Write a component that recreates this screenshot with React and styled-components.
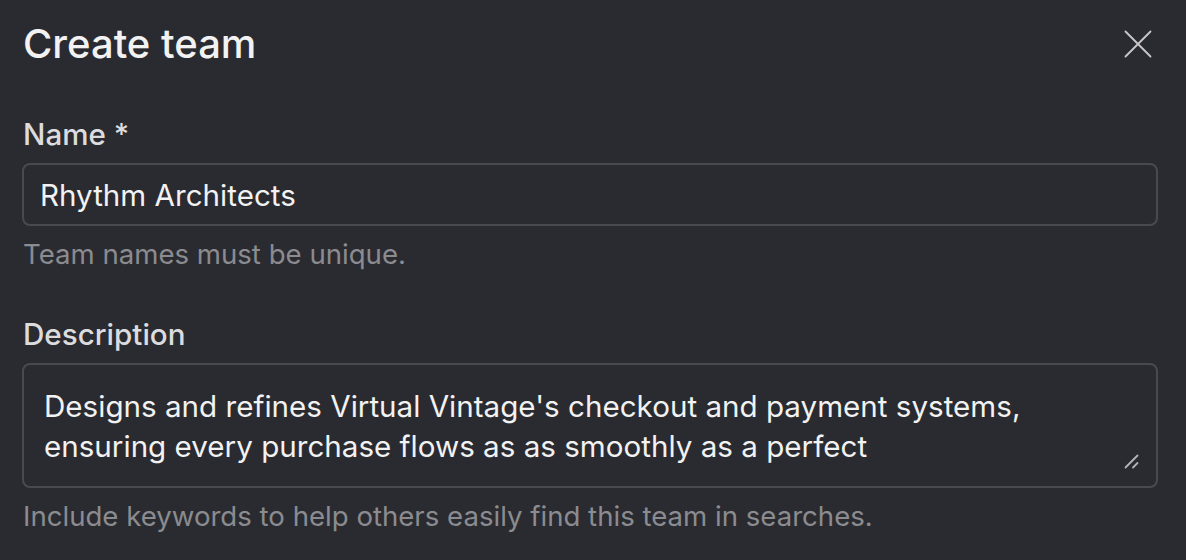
import React from 'react';
import styled, { createGlobalStyle } from 'styled-components';

const Global = createGlobalStyle`
  html, body {
    margin: 0;
    padding: 0;
    background: #2a2b30;
    color-scheme: dark;
  }
  body {
    font-family: Inter, "Noto Sans", sans-serif;
  }
`;

const Dialog = styled.div`
  display: flex;
  flex-direction: column;
  padding: 19px 28px 0 22px;
  background: #2a2b30;
  min-height: 560px;
  box-sizing: border-box;
`;

const Header = styled.div`
  display: flex;
  align-items: center;
  justify-content: space-between;
  height: 50px;
  margin-bottom: 45px;
`;

const Title = styled.h1`
  margin: 0;
  padding-left: 1px;
  font-size: 40px;
  line-height: 50px;
  font-weight: 500;
  color: #f2f2f3;
`;

const CloseButton = styled.button`
  display: flex;
  align-items: center;
  justify-content: center;
  width: 36px;
  height: 36px;
  padding: 0;
  margin-right: 2px;
  border: none;
  background: transparent;
  color: #c9c9cc;
  cursor: pointer;
`;

const Field = styled.div`
  display: flex;
  flex-direction: column;
  margin-bottom: ${p => p.$gap || 0}px;
`;

const Label = styled.label`
  font-size: 29.6px;
  line-height: 40px;
  font-weight: 500;
  color: #dcdcde;
  padding-left: 1px;
  margin-bottom: 9px;
`;

const Input = styled.input`
  box-sizing: border-box;
  height: 63px;
  width: 100%;
  padding: 0 16px;
  border: 2px solid #494a4f;
  border-radius: 8px;
  background: #2a2b30;
  color: #f2f2f3;
  font-family: inherit;
  font-size: 29.6px;
  outline: none;
`;

const AreaWrap = styled.div`
  position: relative;
  display: flex;
`;

const TextArea = styled.textarea`
  box-sizing: border-box;
  height: 125px;
  width: 100%;
  padding: 21px 20px;
  border: 2px solid #494a4f;
  border-radius: 8px;
  background: #2a2b30;
  color: #f2f2f3;
  font-family: inherit;
  font-size: 29.6px;
  line-height: 40px;
  resize: none;
  outline: none;
  overflow: hidden;
`;

const Grip = styled.svg`
  position: absolute;
  right: 19px;
  bottom: 19px;
  pointer-events: none;
  color: #b4b4b8;
`;

const Help = styled.div`
  margin-top: 8px;
  padding-left: 1px;
  font-size: 27.6px;
  line-height: 40px;
  color: #8b8b90;
`;

export default function App() {
  return (
    <>
      <Global />
      <Dialog>
        <Header>
          <Title>Create team</Title>
          <CloseButton aria-label="Close">
            <svg width="28" height="28" viewBox="0 0 28 28" fill="none" stroke="currentColor" strokeWidth="1.8" strokeLinecap="round">
              <path d="M1.5 1.5L26.5 26.5M26.5 1.5L1.5 26.5" />
            </svg>
          </CloseButton>
        </Header>
        <Field $gap={40}>
          <Label>Name *</Label>
          <Input defaultValue="Rhythm Architects" />
          <Help>Team names must be unique.</Help>
        </Field>
        <Field>
          <Label>Description</Label>
          <AreaWrap>
            <TextArea defaultValue="Designs and refines Virtual Vintage's checkout and payment systems, ensuring every purchase flows as as smoothly as a perfect" />
            <Grip width="15" height="15" viewBox="0 0 15 15" fill="none" stroke="currentColor" strokeWidth="1.8" strokeLinecap="round">
              <path d="M1.5 13.5L13.5 1.5M9 13.5L13.5 9" />
            </Grip>
          </AreaWrap>
          <Help>Include keywords to help others easily find this team in searches.</Help>
        </Field>
      </Dialog>
    </>
  );
}
